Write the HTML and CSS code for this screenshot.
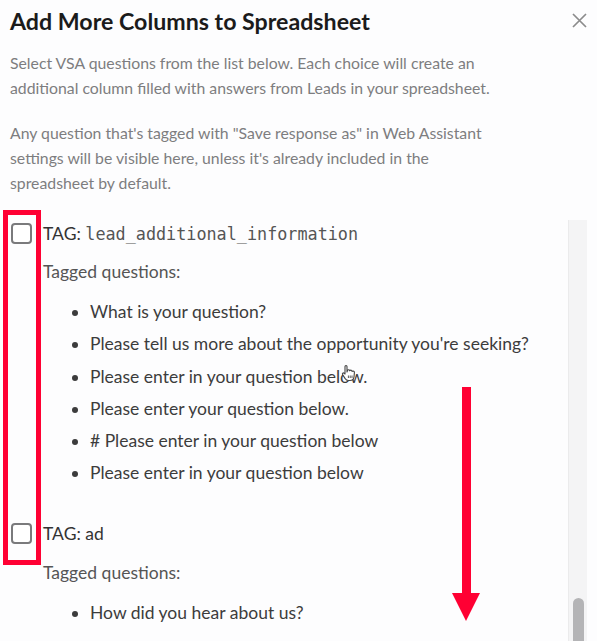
FILE: index.html
```html
<!DOCTYPE html>
<html lang="en">
<head>
    <meta charset="UTF-8">
    <meta name="viewport" content="width=device-width, initial-scale=1.0">
    <title>Add More Columns to Spreadsheet</title>
    <link rel="stylesheet" href="styles.css">
</head>
<body>

    <div class="dialog">
        <header class="dialog-head">
            <h1>Add More Columns to Spreadsheet</h1>
            <button class="close" aria-label="Close">
                <svg width="15" height="15" viewBox="0 0 15 15">
                    <path d="M1 1 L14 14 M14 1 L1 14" stroke="#8c8c8c" stroke-width="1.7" fill="none"/>
                </svg>
            </button>
        </header>

        <div class="intro">
            <p>Select VSA questions from the list below. Each choice will create an additional column filled with answers from Leads in your spreadsheet.</p>
            <p>Any question that's tagged with "Save response as" in Web Assistant settings will be visible here, unless it's already included in the spreadsheet by default.</p>
        </div>

        <div class="scroll-area">
            <div class="tag-list">
                <div class="tag-item">
                    <label class="tag-row">
                        <input type="checkbox">
                        <span class="box"></span>
                        <span class="tag-label">TAG: <code>lead_additional_information</code></span>
                    </label>
                    <p class="tagged">Tagged questions:</p>
                    <ul>
                        <li>What is your question?</li>
                        <li>Please tell us more about the opportunity you're seeking?</li>
                        <li>Please enter in your question below.</li>
                        <li>Please enter your question below.</li>
                        <li># Please enter in your question below</li>
                        <li>Please enter in your question below</li>
                    </ul>
                </div>

                <div class="tag-item">
                    <label class="tag-row">
                        <input type="checkbox">
                        <span class="box"></span>
                        <span class="tag-label">TAG: ad</span>
                    </label>
                    <p class="tagged">Tagged questions:</p>
                    <ul>
                        <li>How did you hear about us?</li>
                    </ul>
                </div>
            </div>

            <div class="scroll-track">
                <div class="scroll-thumb"></div>
            </div>
        </div>

        <!-- annotations drawn on top of the screenshot -->
        <div class="mark-box"></div>
        <svg class="mark-arrow" width="28" height="234" viewBox="0 0 28 234">
            <rect x="10" y="0" width="9" height="210" fill="#ff0033"/>
            <polygon points="0,206 28,206 14,234" fill="#ff0033"/>
        </svg>
        <svg class="cursor" width="20" height="20" viewBox="0 0 20 20">
            <path d="M5 3.5 C5 2.2 7 2.2 7 3.5 L7 9 L7.6 7.4 C8 6.3 9.8 6.5 9.6 7.8 L10 7.6 C10.6 6.8 12.2 7.2 12 8.4 L12.4 8.3 C13.2 7.8 14.6 8.3 14.4 9.6 L14 14 C13.6 16.4 12 17.5 10 17.5 L8.4 17.5 C6.8 17.5 5.8 16.6 5 15.4 L2.6 11.6 C2 10.6 3.2 9.4 4.2 10.2 L5 11 Z" fill="#fff" stroke="#444" stroke-width="1.1" stroke-linejoin="round"/>
            <path d="M8.4 12.5 L8.4 15 M10.2 12.5 L10.2 15 M12 12.5 L12 15" stroke="#444" stroke-width="0.9"/>
        </svg>
    </div>

</body>
</html>
```

FILE: styles.css
```css
*{
    margin: 0;
    padding: 0;
    box-sizing: border-box;
}

body{
    background-color: #fdfdfe;
    font-family: "Lato", "Open Sans", sans-serif;
    overflow: hidden;
}

.dialog{
    position: relative;
    display: flex;
    flex-direction: column;
    height: 641px;
    width: 597px;
}

.dialog-head{
    display: flex;
    justify-content: space-between;
    align-items: flex-start;
    padding: 7px 10px 0 10px;
}

.dialog-head h1{
    font-size: 23.2px;
    font-weight: 700;
    line-height: 28px;
    color: #1b1b1b;
}

.close{
    border: none;
    background: none;
    cursor: pointer;
    margin-top: 6px;
    width: 15px;
    height: 15px;
}

.intro{
    padding: 15px 10px 0 10px;
    width: 525px;
}

.intro p{
    font-size: 15.8px;
    line-height: 25px;
    color: #7d7d80;
}

.intro p + p{
    margin-top: 20px;
}

.scroll-area{
    flex: 1;
    display: flex;
    margin-top: 25px;
    padding-right: 10px;
    overflow: hidden;
    min-height: 0;
}

.tag-list{
    flex: 1;
    overflow: hidden;
}

.tag-item + .tag-item{
    margin-top: 31px;
}

.tag-row{
    display: flex;
    align-items: center;
    height: 26px;
    cursor: pointer;
}

.tag-row input{
    display: none;
}

.box{
    width: 21px;
    height: 21px;
    margin-left: 11px;
    margin-right: 11px;
    border: 2px solid #7a7a7c;
    border-radius: 4px;
    background-color: #fff;
}

.tag-label{
    font-size: 17.5px;
    color: #333;
}

.tag-label code{
    font-family: "DejaVu Sans Mono", monospace;
    font-size: 16.8px;
    color: #555;
}

.tagged{
    margin: 15px 0 0 43px;
    font-size: 17.5px;
    line-height: 22px;
    color: #555;
}

.tag-item ul{
    margin: 13px 0 0 43px;
    padding-left: 47px;
    list-style: disc;
}

.tag-item li{
    font-size: 17.5px;
    line-height: 32.3px;
    color: #3c3c3c;
}

.scroll-track{
    width: 19px;
    background-color: #f4f4f5;
    border-left: 1px solid #ebebec;
    display: flex;
    flex-direction: column;
    align-items: center;
}

.scroll-thumb{
    margin-top: auto;
    margin-bottom: -10px;
    width: 11px;
    height: 53px;
    border-radius: 6px;
    background-color: #b4b4b6;
}

.mark-box{
    position: absolute;
    left: 3px;
    top: 210px;
    width: 38px;
    height: 355px;
    border: 5px solid #ff0033;
}

.mark-arrow{
    position: absolute;
    left: 452px;
    top: 387px;
}

.cursor{
    position: absolute;
    left: 340px;
    top: 363px;
}
```
